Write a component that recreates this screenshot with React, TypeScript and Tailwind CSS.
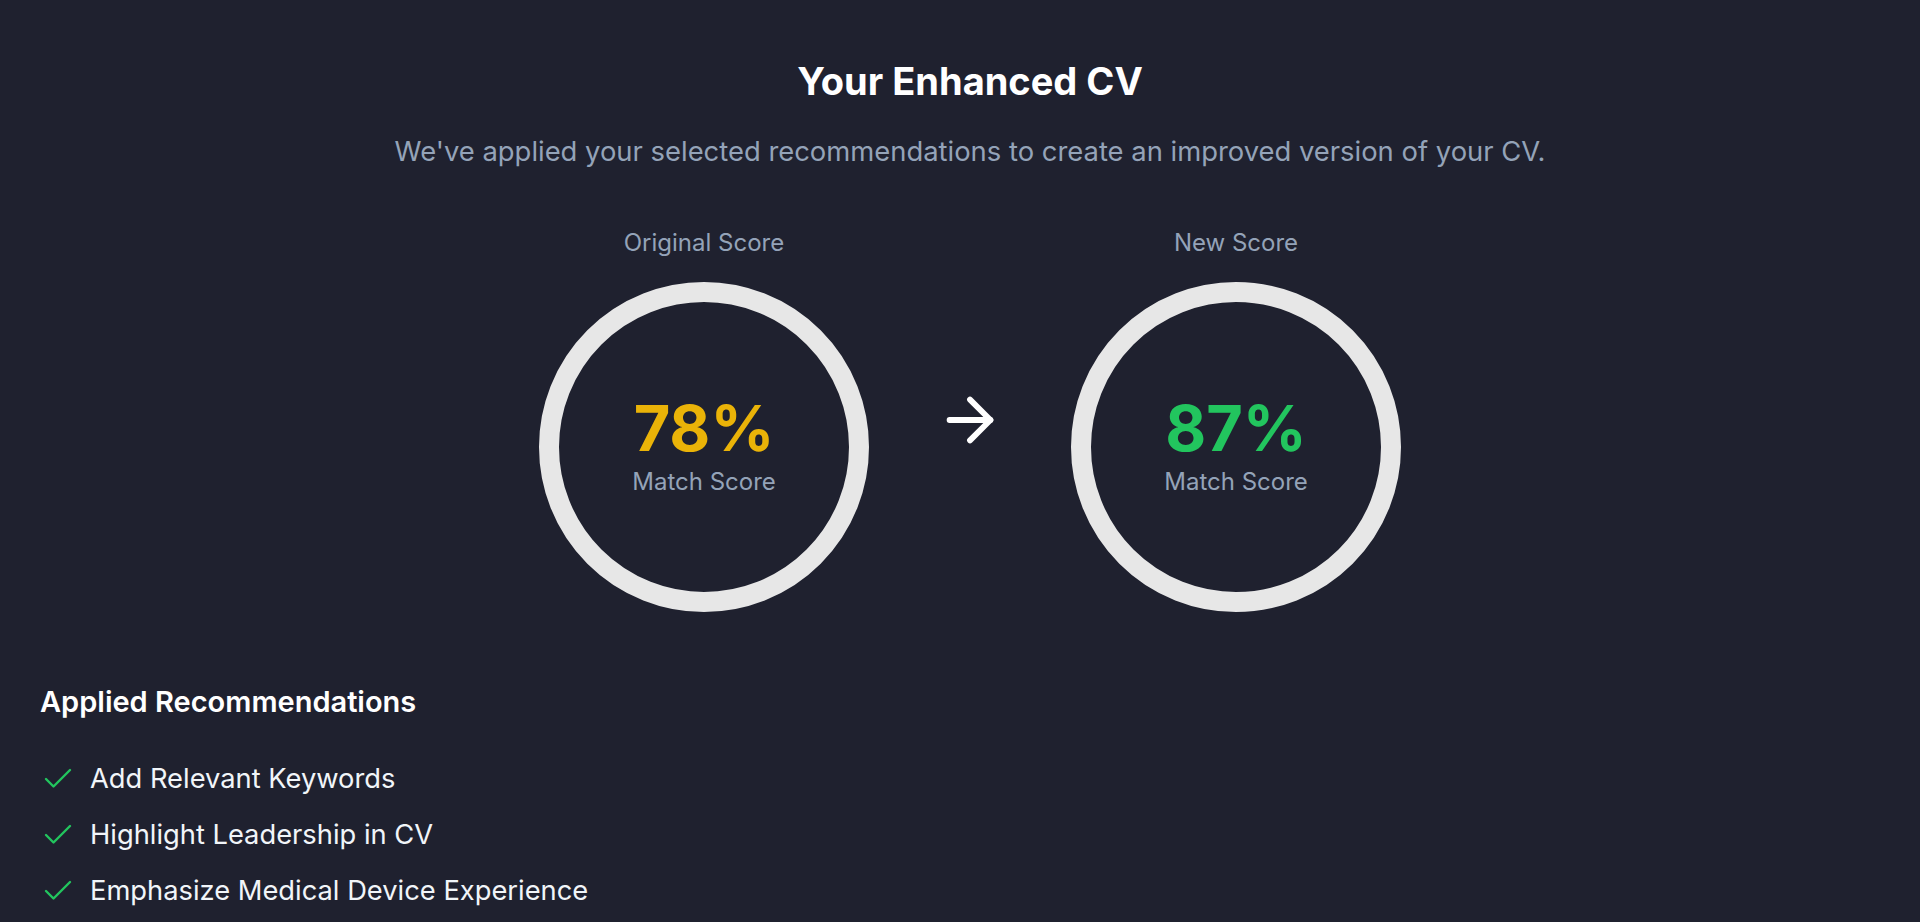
import { ArrowRight, Check } from "lucide-react";

const applied = [
  "Add Relevant Keywords",
  "Highlight Leadership in CV",
  "Emphasize Medical Device Experience",
];

function ScoreCircle({ label, value, color }: { label: string; value: number; color: string }) {
  return (
    <div className="flex flex-col items-center">
      <div className="text-[24px] leading-[32px] text-[#94a3b8]">{label}</div>
      <div className="mt-[23px] w-[330px] h-[330px] rounded-full border-[20px] border-[#e7e7e7] flex flex-col items-center justify-center">
        <div className={"text-[63px] leading-none font-bold " + color}>{value}%</div>
        <div className="mt-[6px] text-[24px] leading-[32px] text-[#94a3b8]">Match Score</div>
      </div>
    </div>
  );
}

export default function App() {
  return (
    <div className="min-h-screen w-full bg-[#1f212f] text-white pl-[40px] pr-[20px] pt-[59px] font-['Inter','Noto_Sans',sans-serif]">
      <div className="flex flex-col items-center">
        <h1 className="text-[38px] leading-[44px] font-bold">Your Enhanced CV</h1>
        <p className="mt-[32px] text-[27.4px] leading-[32px] text-[#94a3b8]">
          We've applied your selected recommendations to create an improved version of your CV.
        </p>

        <div className="mt-[60px] flex items-center gap-[66px]">
          <ScoreCircle label="Original Score" value={78} color="text-[#eab308]" />
          <ArrowRight size={70} strokeWidth={2} className="text-white" />
          <ScoreCircle label="New Score" value={87} color="text-[#22c55e]" />
        </div>
      </div>

      <div className="mt-[72px]">
        <h2 className="text-[29px] leading-[36px] font-semibold">Applied Recommendations</h2>
        <ul className="mt-[41px] flex flex-col gap-[20px]">
          {applied.map((item, i) => (
            <li key={i} className="flex items-center gap-[14px]">
              <Check size={36} strokeWidth={1.6} className="text-[#22c55e] shrink-0" />
              <span className="text-[27.3px] leading-[36px] text-[#f1f5f9]">{item}</span>
            </li>
          ))}
        </ul>
      </div>
    </div>
  );
}
